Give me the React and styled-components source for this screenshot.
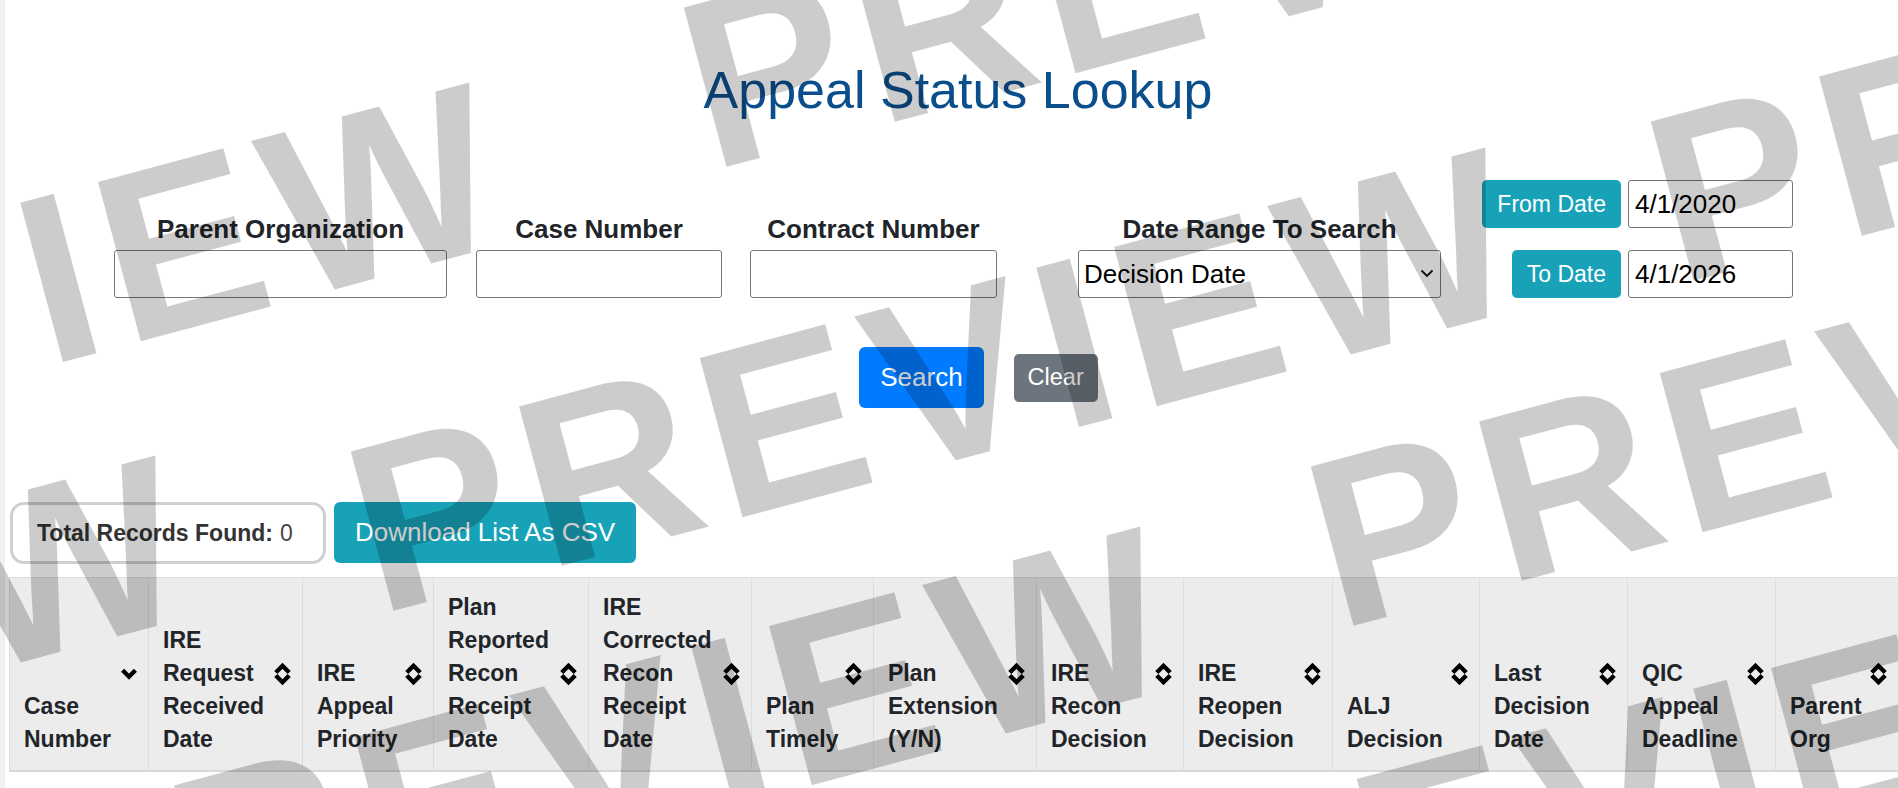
import React from "react";
import styled, { createGlobalStyle } from "styled-components";

const GlobalStyle = createGlobalStyle`
  html, body {
    margin: 0;
    padding: 0;
    overflow: hidden;
    background: #fff;
  }
  body {
    font-family: "Liberation Sans", Arial, sans-serif;
    color: #212529;
  }
  * {
    box-sizing: border-box;
  }
`;

const Page = styled.div`
  position: relative;
  min-height: 100vh;
  border-left: 5px solid #f1f1f1;
  padding-left: 4px;
`;

const Title = styled.h1`
  margin: 0;
  padding: 59px 0 0 9px;
  font-size: 52px;
  font-weight: 400;
  line-height: 62px;
  color: #0a4f8c;
  text-align: center;
`;

const FilterRow = styled.div`
  display: flex;
  align-items: flex-end;
  margin-top: 59px;
  padding-left: 105px;
`;

const Field = styled.div`
  display: flex;
  flex-direction: column;
  align-items: center;
  width: ${(p) => p.$w}px;
  margin-right: ${(p) => p.$gap}px;
`;

const Label = styled.label`
  font-size: 26px;
  font-weight: 700;
  line-height: 31px;
  margin-bottom: 5px;
  white-space: nowrap;
`;

const TextInput = styled.input`
  width: ${(p) => p.$w || "100%"};
  height: 48px;
  border: 1px solid #767676;
  border-radius: 3px;
  padding: 0 6px;
  font-family: "Liberation Sans", Arial, sans-serif;
  font-size: 26px;
  color: #000;
  background: #fff;
`;

const SelectWrap = styled.div`
  position: relative;
  width: 100%;
`;

const Select = styled.select`
  appearance: none;
  width: 100%;
  height: 48px;
  border: 1px solid #767676;
  border-radius: 3px;
  padding: 0 5px;
  font-family: "Liberation Sans", Arial, sans-serif;
  font-size: 26px;
  color: #000;
  background: #fff;
`;

const Caret = styled.svg`
  position: absolute;
  right: 7px;
  top: 19px;
  pointer-events: none;
`;

const DateGrid = styled.div`
  display: grid;
  grid-template-columns: 141px 165px;
  column-gap: 7px;
  row-gap: 22px;
  align-items: center;
`;

const DateTag = styled.span`
  justify-self: end;
  height: 48px;
  line-height: 48px;
  padding: 0 15px;
  border-radius: 5px;
  background: #17a2b8;
  color: #fff;
  font-size: 23px;
  white-space: nowrap;
`;

const ButtonRow = styled.div`
  display: flex;
  justify-content: center;
  align-items: center;
  gap: 30px;
  margin-top: 49px;
  padding-left: 50px;
`;

const Button = styled.button`
  border: none;
  color: #fff;
  font-family: "Liberation Sans", Arial, sans-serif;
  font-size: ${(p) => (p.$lg ? 26 : 23.5)}px;
  height: ${(p) => (p.$lg ? 61 : 48)}px;
  padding: 0 ${(p) => (p.$lg ? 21 : 14)}px;
  border-radius: ${(p) => (p.$lg ? 6 : 5)}px;
  background: ${(p) => p.$bg};
  white-space: nowrap;
  cursor: pointer;
`;

const RecordsRow = styled.div`
  display: flex;
  gap: 8px;
  margin-top: 94px;
  padding-left: 1px;
`;

const RecordsBox = styled.div`
  display: flex;
  align-items: center;
  width: 316px;
  height: 62px;
  padding: 0 24px;
  border: 3px solid #cfcfcf;
  border-radius: 14px;
  font-size: 23px;
  color: #444;
  white-space: nowrap;

  b {
    color: #333;
    margin-right: 7px;
  }
`;

const Table = styled.table`
  margin-top: 13px;
  border-collapse: collapse;
  table-layout: fixed;
  width: 1889px;
`;

const Th = styled.th`
  position: relative;
  width: ${(p) => p.$w}px;
  padding: 13px 34px 14px 14px;
  background: #ececec;
  border: 1px solid #dcdde0;
  border-bottom: 2px solid #d6d8dc;
  vertical-align: bottom;
  text-align: left;
  font-size: 23px;
  font-weight: 700;
  line-height: 33px;
  color: #212529;
`;

const SortIcon = styled.svg`
  position: absolute;
  right: 10px;
  top: 50%;
  transform: translateY(-50%);
`;

const Watermark = styled.div`
  position: fixed;
  inset: 0;
  overflow: hidden;
  pointer-events: none;
  z-index: 10;
`;

const Stamp = styled.span`
  position: absolute;
  font: 700 240px/1 "Liberation Sans", Arial, sans-serif;
  letter-spacing: 14px;
  color: rgba(0, 0, 0, 0.2);
  white-space: nowrap;
  transform-origin: 0 203px;
  transform: rotate(-15deg);
`;

const columns = [
  { label: "Case Number", w: 139, sorted: true },
  { label: "IRE Request Received Date", w: 154 },
  { label: "IRE Appeal Priority", w: 131 },
  { label: "Plan Reported Recon Receipt Date", w: 155 },
  { label: "IRE Corrected Recon Receipt Date", w: 163 },
  { label: "Plan Timely", w: 122 },
  { label: "Plan Extension (Y/N)", w: 163 },
  { label: "IRE Recon Decision", w: 147 },
  { label: "IRE Reopen Decision", w: 149 },
  { label: "ALJ Decision", w: 147 },
  { label: "Last Decision Date", w: 148 },
  { label: "QIC Appeal Deadline", w: 148 },
  { label: "Parent Org", w: 123 },
];

// bottom-left of each "P" in the watermark
const stamps = [
  [-621, 545],
  [728, 166],
  [-935, 918],
  [395, 610],
  [1695, 280],
  [50, 989],
  [1355, 625],
  [1052, 1031],
];

const SortBoth = () => (
  <SortIcon width="19" height="25" viewBox="0 0 19 25">
    <polyline points="2.8,11 9.5,4.3 16.2,11" fill="none" stroke="#000" strokeWidth="4.4" />
    <polyline points="2.8,14 9.5,20.7 16.2,14" fill="none" stroke="#000" strokeWidth="4.4" />
  </SortIcon>
);

const SortDown = () => (
  <SortIcon width="18" height="14" viewBox="0 0 18 14">
    <polyline points="2.6,3.3 9,9.7 15.4,3.3" fill="none" stroke="#000" strokeWidth="4.4" />
  </SortIcon>
);

export default function App() {
  return (
    <Page>
      <GlobalStyle />
      <Title>Appeal Status Lookup</Title>

      <FilterRow>
        <Field $w={333} $gap={29}>
          <Label>Parent Organization</Label>
          <TextInput />
        </Field>
        <Field $w={246} $gap={28}>
          <Label>Case Number</Label>
          <TextInput />
        </Field>
        <Field $w={247} $gap={81}>
          <Label>Contract Number</Label>
          <TextInput />
        </Field>
        <Field $w={363} $gap={39}>
          <Label>Date Range To Search</Label>
          <SelectWrap>
            <Select defaultValue="decision">
              <option value="decision">Decision Date</option>
              <option value="received">Received Date</option>
            </Select>
            <Caret width="14" height="9" viewBox="0 0 14 9">
              <polyline points="1.5,1.5 7,7 12.5,1.5" fill="none" stroke="#111" strokeWidth="1.8" />
            </Caret>
          </SelectWrap>
        </Field>
        <DateGrid>
          <DateTag>From Date</DateTag>
          <TextInput $w="165px" defaultValue="4/1/2020" />
          <DateTag>To Date</DateTag>
          <TextInput $w="165px" defaultValue="4/1/2026" />
        </DateGrid>
      </FilterRow>

      <ButtonRow>
        <Button $lg $bg="#007bff">Search</Button>
        <Button $bg="#6c757d">Clear</Button>
      </ButtonRow>

      <RecordsRow>
        <RecordsBox>
          <b>Total Records Found:</b> 0
        </RecordsBox>
        <Button $lg $bg="#17a2b8">Download List As CSV</Button>
      </RecordsRow>

      <Table>
        <thead>
          <tr>
            {columns.map((c) => (
              <Th key={c.label} $w={c.w}>
                {c.label}
                {c.sorted ? <SortDown /> : <SortBoth />}
              </Th>
            ))}
          </tr>
        </thead>
      </Table>

      <Watermark>
        {stamps.map(([x, y], i) => (
          <Stamp key={i} style={{ left: x - 17, top: y - 198 }}>
            PREVIEW
          </Stamp>
        ))}
      </Watermark>
    </Page>
  );
}
